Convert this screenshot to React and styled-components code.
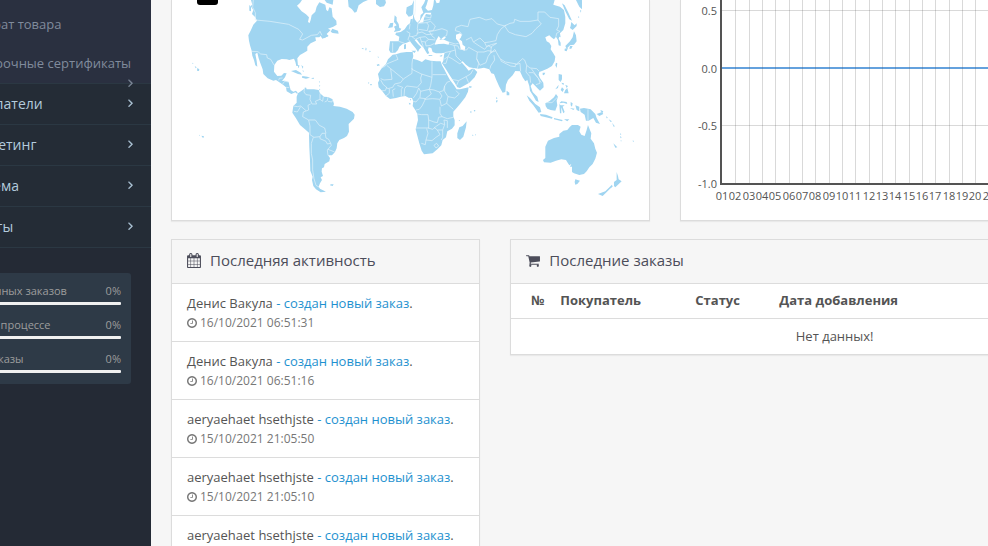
import styled, { createGlobalStyle } from "styled-components"

const GlobalStyle = createGlobalStyle`
  * { box-sizing: border-box; }
  body {
    margin: 0;
    background: #f6f6f6;
    color: #545454;
    font-family: "Open Sans", "Noto Sans", sans-serif;
    font-size: 13px;
    line-height: 19px;
  }
  a { text-decoration: none; }
`

const Page = styled.div`
  display: flex;
  height: 100vh;
  overflow: hidden;
`
const Sidebar = styled.aside`
  flex: none;
  display: flex;
  justify-content: flex-end;
  width: 151px;
  overflow: hidden;
  background: #242a35;
`
const SidebarInner = styled.div`
  flex: none;
  width: 235px;
`
const Menu = styled.ul`
  list-style: none;
  margin: 0 0 25px;
  padding: 0;
`
const MenuItem = styled.li`
  border-bottom: 1px solid #2b3843;
`
const MenuLink = styled.a`
  display: flex;
  align-items: center;
  justify-content: space-between;
  height: 40px;
  padding: 0 18px 2px 46px;
  background: #242c36;
  color: #b3cbdd;
  font-size: 14px;
`
const SubMenu = styled.ul`
  list-style: none;
  margin: 0;
  padding: 5px 0 0;
  background: #2a3040;
`
const SubLink = styled.a`
  position: relative;
  display: block;
  height: 39px;
  padding: 10px 18px 10px 47px;
  color: #808b9c;
  white-space: nowrap;
  svg {
    position: absolute;
    right: 18px;
    bottom: -4px;
  }
`
const Stats = styled.ul`
  list-style: none;
  margin: 0 20px;
  padding: 9px 10px 0;
  height: 111px;
  border-radius: 3px;
  background: #2e3a47;
  color: #9d9d9d;
  font-size: 11px;
`
const Stat = styled.li`
  height: 34px;
`
const StatLine = styled.div`
  display: flex;
  justify-content: space-between;
  line-height: 18px;
  margin-bottom: 2px;
`
const Track = styled.div`
  height: 3px;
  border-radius: 1px;
  background: #f0f0f0;
`
const Content = styled.main`
  flex: none;
  min-width: 1028px;
  width: calc(100% - 151px);
  padding: 0 20px;
`
const Grid = styled.div`
  display: grid;
  grid-template-columns: repeat(12, 1fr);
  gap: 18px 30px;
  align-items: start;
`
const Panel = styled.section`
  grid-column: span ${p => p.$span};
  position: relative;
  min-width: 0;
  overflow: hidden;
  background: #fff;
  border: 1px solid #dcdcdc;
  ${p => p.$open && "border-top: 0;"}
  box-shadow: 0 1px 1px rgba(0, 0, 0, 0.05);
`
const PanelHead = styled.header`
  display: flex;
  align-items: center;
  gap: 9px;
  height: 44px;
  padding: 0 15px 2px;
  background: #f6f6f6;
  border-bottom: 1px solid #dcdcdc;
  color: #4c4d5a;
`
const PanelTitle = styled.h3`
  margin: 0;
  font-size: 15px;
  font-weight: 400;
`
const Drawing = styled.svg`
  display: block;
  width: 100%;
  height: 220px;
`
const ZoomOut = styled.button`
  position: absolute;
  top: -16px;
  left: 25px;
  width: 21px;
  height: 21px;
  padding: 0;
  border: 0;
  border-radius: 3px;
  background: #000;
`
const Activity = styled.ul`
  list-style: none;
  margin: 0;
  padding: 0;
`
const ActivityItem = styled.li`
  padding: 10px 15px 9px;
  border-bottom: 1px solid #dcdcdc;
  a { color: #1e91cf; }
`
const When = styled.small`
  display: flex;
  align-items: center;
  gap: 3px;
  font-size: 12px;
  color: #777;
`
const Table = styled.table`
  width: 100%;
  table-layout: fixed;
  border-collapse: collapse;
`
const Th = styled.th`
  width: ${p => p.$w || "auto"};
  height: 34px;
  padding: 0 8px;
  border-bottom: 1px solid #dcdcdc;
  text-align: ${p => p.$align || "left"};
  white-space: nowrap;
`
const Td = styled.td`
  height: 36px;
  padding: 1px 0 0;
  text-align: center;
`

const ICONS = {
  angle: {
    box: "589 384 582 1088",
    d: "M1171 960q0 13-10 23l-466 466q-10 10-23 10t-23-10l-50-50q-10-10-10-23t10-23l393-393-393-393q-10-10-10-23t10-23l50-50q10-10 23-10t23 10l466 466q10 10 10 23z",
    stroke: 60,
  },
  calendar: {
    box: "64 0 1664 1792",
    d: "M192 1664h288v-288h-288v288zm352 0h320v-288h-320v288zm-352-352h288v-320h-288v320zm352 0h320v-320h-320v320zm-352-384h288v-288h-288v288zm736 736h320v-288h-320v288zm-384-736h320v-288h-320v288zm768 736h288v-288h-288v288zm-384-352h320v-320h-320v320zm-352-864v-288q0-13-9.5-22.5t-22.5-9.5h-64q-13 0-22.5 9.5t-9.5 22.5v288q0 13 9.5 22.5t22.5 9.5h64q13 0 22.5-9.5t9.5-22.5zm736 864h288v-320h-288v320zm-384-384h320v-288h-320v288zm384 0h288v-288h-288v288zm32-480v-288q0-13-9.5-22.5t-22.5-9.5h-64q-13 0-22.5 9.5t-9.5 22.5v288q0 13 9.5 22.5t22.5 9.5h64q13 0 22.5-9.5t9.5-22.5zm384-64v1280q0 52-38 90t-90 38h-1408q-52 0-90-38t-38-90v-1280q0-52 38-90t90-38h128v-96q0-66 47-113t113-47h64q66 0 113 47t47 113v96h384v-96q0-66 47-113t113-47h64q66 0 113 47t47 113v96h128q52 0 90 38t38 90z",
  },
  cart: {
    box: "64 0 1664 1792",
    d: "M704 1536q0 52-38 90t-90 38-90-38-38-90 38-90 90-38 90 38 38 90zm896 0q0 52-38 90t-90 38-90-38-38-90 38-90 90-38 90 38 38 90zm128-1088v512q0 24-16.5 42.5t-40.5 21.5l-1044 122q13 60 13 70 0 16-24 64h920q26 0 45 19t19 45-19 45-45 19h-1024q-26 0-45-19t-19-45q0-11 8-31.5t16-36 21.5-40 15.5-29.5l-177-823h-204q-26 0-45-19t-19-45 19-45 45-19h256q16 0 28.5 6.5t19.5 15.5 13 24.5 8 26 5.5 29.5 4.5 26h1201q26 0 45 19t19 45z",
  },
  clock: {
    box: "128 128 1536 1536",
    d: "M1024 544v448q0 14-9 23t-23 9h-320q-14 0-23-9t-9-23v-64q0-14 9-23t23-9h224v-352q0-14 9-23t23-9h64q14 0 23 9t9 23zm416 352q0-148-73-273t-198-198-273-73-273 73-198 198-73 273 73 273 198 198 273 73 273-73 198-198 73-273zm224 0q0 209-103 385.5t-279.5 279.5-385.5 103-385.5-103-279.5-279.5-103-385.5 103-385.5 279.5-279.5 385.5-103 385.5 103 279.5 279.5 103 385.5z",
  },
}

function Icon({ name, width, height }) {
  const { box, d, stroke = 0 } = ICONS[name]
  return <svg width={width} height={height} viewBox={box} fill="currentColor" stroke="currentColor" strokeWidth={stroke} aria-hidden="true">
    <path d={d} />
  </svg>
}

// land outlines, three map units to one pixel
const AMERICAS = [
  "M243 0L247 14 242 18 250 30 246 42 256 52 261 62 250 74 243 90 235 106 237 122 240 136 245 152 247 167 252 180 256 196 262 200 260 182 256 162 262 158 266 175 272 192 278 208 280 222 293 235 310 242 318 240 328 247 340 255 348 262 350 274 364 282 376 277 382 282 383 278 378 272 370 275 362 270 358 256 356 246 345 242 336 243 345 232 350 220 342 219 334 227 322 228 312 215 313 195 322 182 335 177 350 178 358 180 372 176 376 185 379 198 384 198 382 175 390 165 402 158 412 152 412 140 422 130 438 122 436 112 448 112 452 108 457 116 476 108 470 102 482 90 474 86 490 80 500 74 499 62 488 50 485 25 478 22 474 34 469 30 466 14 448 7 440 20 436 35 425 46 422 60 419 69 414 66 417 52 408 43 395 34 381 17 390 9 396 0Z",
  "M384 280L398 270 408 262 410 268 418 268 432 268 446 270 450 280 462 290 474 291 488 298 492 312 490 318 510 320 530 326 548 336 554 344 552 356 536 372 537 395 531 408 522 414 508 420 502 430 500 445 495 456 486 466 474 466 480 474 478 484 464 492 462 502 456 505 455 515 459 528 452 532 456 540 450 550 446 560 450 566 468 575 452 577 438 568 430 558 426 540 428 530 421 512 420 480 418 440 417 398 405 388 390 375 378 355 367 338 370 318 380 308 380 290Z",
  "M464 0L470 8 488 14 490 0ZM534 0L536 20 546 28 554 38 560 35 566 16 580 6 594 0Z",
  "M487 86L504 92 506 101 488 99 482 95ZM458 110L472 106 474 109 462 115ZM363 213L378 210 392 218 396 224 384 222ZM397 228L412 230 420 233 408 236 396 233ZM425 234L432 233 432 236 425 236Z",
  "M238 15L243 20 243 34 238 32ZM82 204L88 208 87 213 81 212ZM74 198L80 202 77 205ZM66 188L70 190 69 193ZM95 407L102 409 101 413 96 412ZM87 404L90 406 88 408ZM482 553L491 553 488 558 480 556ZM385 195L388 195 387 204 384 202ZM394 195L400 200 398 206ZM398 210L402 214 399 215ZM576 146L580 144 581 148ZM586 143L590 144 588 149ZM598 152L602 153 601 157ZM447 243L450 246 447 248ZM448 255L451 257 448 260ZM448 266L451 268 448 272Z",
]
const AMERICA_BORDERS =
  "M256 60L300 64 356 73 386 88 398 102 389 118 398 120 424 106 442 104 450 94 456 106M246 154L264 155 272 162 290 164 292 174 302 178 312 195M326 241L328 235 338 234M338 252L344 244 356 246M348 262L358 263M404 262L402 276 408 284 422 286 420 298 426 312 440 312 436 304 450 298 450 280M450 298L458 304 460 290M464 306L472 302 474 291M474 304L486 306 488 298M422 312L414 316 416 330 400 336 398 350 416 360 420 378 420 404 432 412 450 410 456 400 468 400 464 384 448 376 436 360 416 360M370 318L382 320 392 318 408 332M372 334L382 336 392 320M450 410L450 416 468 424 472 432 482 430 476 418 468 414 466 402M482 430L484 436 472 450 474 466M474 448L494 456M430 412L424 430 424 460 428 480 428 510 432 536 438 556 448 562M250 0L248 22 256 38 256 60"

const OLD_WORLD = [
  // Africa
  "M98 164L108 163 122 158 140 156 158 156 160 168 158 176 172 180 186 186 196 178 212 182 230 184 242 184 246 196 252 206 260 222 270 240 282 256 290 268 300 268 326 262 324 275 316 292 302 310 290 324 280 335 280 350 284 360 284 376 276 386 262 394 258 412 248 420 244 436 232 448 218 460 192 463 185 452 178 430 170 400 167 388 174 360 172 342 166 330 158 318 160 304 156 294 146 293 136 288 122 290 108 294 90 297 78 288 66 272 56 262 54 248 58 240 54 222 64 206 78 192 84 178Z",
  // Europe and Asia
  "M162 0L156 14 140 22 138 40 146 50 154 48 160 42 164 58 172 68 180 60 182 45 190 38 184 22 192 10 196 0 204 0 200 14 196 24 204 32 216 30 220 16 222 0 226 0 230 10 238 8 240 0 584 0 580 14 600 20 612 30 616 50 616 70 610 90 600 100 602 112 598 110 596 116 602 128 602 138 596 136 594 120 588 110 582 118 574 112 568 106 556 112 560 124 568 128 574 138 572 148 580 160 586 170 584 184 576 198 562 206 548 212 538 216 536 224 540 234 550 248 551 262 540 272 534 266 526 258 518 250 512 258 518 276 532 290 536 306 528 302 520 288 510 272 508 258 502 240 496 244 488 232 480 214 466 213 458 226 444 240 438 254 436 276 428 278 418 260 408 238 402 222 394 220 388 208 372 203 356 206 340 204 328 202 318 194 308 184 304 186 318 202 326 212 336 206 342 206 352 216 344 232 328 248 300 264 292 262 284 248 272 230 258 208 246 190 250 182 252 166 254 158 244 160 228 160 218 156 214 144 206 142 204 150 208 160 202 162 196 152 190 142 180 132 170 118 164 120 174 132 184 142 178 148 174 156 168 146 158 134 150 124 140 128 128 132 118 140 114 150 106 158 92 158 87 150 90 124 116 124 118 110 106 104 108 98 122 96 134 88 142 76 150 70 152 58 158 56 158 70 175 70 190 67 192 55 198 42 212 44 214 38 196 38 192 42 186 52 178 66 170 72 158 70Z",
  "M104 46L110 52 110 62 116 72 118 84 124 86 120 92 102 96 106 88 102 80 110 76 102 66ZM90 70L100 68 98 82 84 84 88 76ZM48 0L48 12 60 21 72 19 78 8 76 0ZM154 152L168 152 164 159ZM132 134L138 132 138 146 132 148ZM206 165L218 166 216 168 206 168ZM238 168L248 164 244 170ZM320 364L318 382 310 410 300 420 292 414 292 400 298 382 308 378Z",
  "M330 336L334 332 334 340ZM341 330L346 330 345 336ZM296 360L300 361 298 364ZM345 402L348 404 346 407ZM336 404L341 405 338 408ZM327 259L335 259 334 263 328 263ZM150 296L154 298 151 302ZM146 308L152 310 150 316ZM5 144L9 145 7 148ZM15 148L20 148 18 152ZM27 153L30 155 28 157ZM52 170L56 170 56 174ZM50 194L56 192 60 196 52 198ZM24 247L28 248 26 252ZM30 252L36 252 33 257ZM409 292L412 294 410 298ZM408 302L412 304 409 308Z",
]
const SEAS =
  "M224 134L228 122 236 108 242 116 238 120 248 118 254 120 268 126 266 134 252 131 236 132ZM244 116L252 110 258 112 252 118ZM288 104L300 100 306 104 302 114 298 118 306 124 308 134 316 140 314 152 302 148 300 136 296 126 288 116Z"
const OLD_WORLD_BORDERS =
  "M108 164L114 178 104 182 80 192 74 200 64 202M80 196L92 206 96 238 72 240 62 236M92 206L130 237 156 220 156 204M158 176L156 192 156 208 184 222 216 232 216 184M218 224H258M130 237L122 248 104 252 98 262 84 266 78 262M62 240L70 254 80 262 76 272 66 272M78 288L88 280 88 266M100 290L98 270 106 266M124 290L124 268 128 262 112 256M132 290L134 266 140 258 172 262 184 248 182 234 186 222M160 294L170 280 176 264M176 264L182 274 180 292 168 306 160 304M182 274L208 268 212 256 216 232M208 268L214 282 196 296 180 294M196 296L194 302 186 318 178 328 168 330M194 298L218 296 240 298 246 288 238 276 222 270 208 268M238 276L250 272 254 258 262 246 270 244M254 258L254 274 264 290 284 294 298 282 288 272M264 290L260 310 244 318 240 300M260 310L280 328M240 320L240 340 246 350 262 356 280 352M246 350L236 352 232 368 222 366 206 360 204 344 184 344 172 342M206 360V384H168M200 386L204 400 198 420 196 434 184 430M204 384L218 388 230 378 242 370 254 374 248 390 232 390 222 382M232 390L240 404 228 412 216 422 198 420M248 390L248 412 244 420M254 374L252 360 262 362 262 384M222 436L230 430 236 438 228 444ZM140 94L150 100 148 108 156 110 170 106 174 96 172 86 174 70M150 72L148 88M174 70L200 68 206 76 202 92 176 88 M200 68L212 64 226 78 220 92 206 94M190 62L212 58M194 50L212 54 214 44M206 94L224 92 246 86 262 92 260 106 250 112M148 108L144 118 150 124M156 110L166 118 180 112 196 110 206 118 226 120M116 124L134 130M98 128V156M166 0L166 30 164 46M170 100L186 96 200 104 220 102M180 112L184 124 196 126 206 118M184 124L190 140M196 126L198 138 212 136 224 130M208 94L216 108 226 116M268 132L282 136 286 150 272 154 254 158M282 136L294 138 298 148M266 126L286 132 296 130M272 154L264 170 252 178M264 170L276 176 300 192 306 186M286 150L288 168 304 184M264 170L258 190 250 190M274 238L296 242 318 230 332 222 340 208M296 242L290 256M318 230L326 248M300 148L320 150 326 142 344 152 352 156 350 176 356 190 352 206M352 156L372 156 384 152 396 154M350 176L360 196 378 188 384 170 392 158 408 152M306 104L300 96 286 92 288 82 304 76 324 80 330 58 358 52 378 60 396 56 412 72 434 78 438 74M318 120L334 112 340 126 358 138 374 148M340 126L360 114 374 128 388 126 408 122 412 104 422 88 434 78M374 128L380 140 394 134 410 130M374 148L384 136 396 144M434 78L450 70 462 68 464 58 480 64 510 64 534 60 544 72 528 86 516 100 498 110 466 104 446 96 434 78M534 60L534 36 554 36 570 52 596 56 596 78 590 90 600 94M410 130L394 140 392 160 404 148 410 158 420 176 436 186 470 192 488 176 494 180 500 196 510 204 530 206 538 214M402 166L404 180 392 198 390 206M422 178L424 184 452 198 466 200 466 192M468 194L480 190 482 214M500 196L498 216 510 230 512 248M506 218L520 218 536 236 540 250 528 254M514 206L530 228 544 248M588 110L590 100 600 94"

// right part: islands of the Pacific and Oceania
const PACIFIC = [
  "M276 375L294 375 302 380 298 394 304 404 314 408 320 390 324 375 330 390 334 400 332 416 342 430 346 446 351 458 346 476 338 492 328 502 320 514 312 522 298 525 282 520 276 516 276 500 270 500 274 492 268 496 264 490 258 480 244 478 228 482 212 488 192 487 189 480 196 474 196 440 204 422 222 414 238 410 238 402 250 392 262 390 270 380Z",
  "M286 538L300 542 292 552 286 554 284 546ZM410 516L414 528 416 538 425 544 414 554 406 562 402 558 402 546 410 540ZM396 554L398 560 390 566 378 578 368 588 354 582 376 574 386 564Z",
  "M300 326L312 324 332 328 346 342 350 354 360 372 348 368 340 354 326 362 318 362 314 344 302 336ZM196 310L208 304 222 292 228 282 234 290 230 302 232 316 226 332 212 330 202 326 197 318ZM140 286L150 294 166 312 180 322 184 336 176 338 160 316 148 302ZM180 342L198 344 218 352 216 356 198 352 182 348Z",
  "M238 310L250 308 262 312 260 306 244 304ZM238 312L240 340 244 340 244 322 250 340 254 336 248 320 254 316 242 316ZM222 354L232 356 248 360 246 364 222 358ZM252 358L268 358 262 364ZM272 306L278 310 276 320 272 316ZM270 324L284 326 280 330ZM286 316L298 320 298 334 290 330Z",
  "M236 222L246 224 246 238 242 246 236 240ZM244 248L252 250 250 256ZM226 268L236 254 234 264ZM256 254L264 258 260 264ZM246 262L252 268 248 276 242 270ZM262 264L266 280 252 280 256 270ZM228 188L232 190 230 204 226 196ZM80 272L88 278 88 286 80 286ZM188 218L196 218 192 226 188 224Z",
  "M282 94L288 106 290 124 282 134 270 136 260 146 256 138 270 124 278 112ZM254 146L264 144 260 154 254 152ZM270 138L278 138 274 146 268 146ZM274 66L284 76 290 70 290 78 278 90 270 84 272 78ZM246 10L254 16 266 40 276 62 268 58 256 34ZM288 0L306 0 306 28 298 20 292 8ZM300 30L304 32 302 38ZM296 48L298 52 294 54Z",
  "M350 342L366 336 370 342 358 348ZM362 330L370 334 368 338 362 334ZM378 348L384 354 380 355ZM386 358L396 364 392 366ZM396 368L404 378 402 382ZM420 400L424 402 422 406ZM420 408L425 412 422 415ZM400 430L412 442 406 443ZM457 422L462 422 461 426ZM422 420L425 422 423 425ZM49 292L52 294 50 298ZM49 300L53 301 51 308Z",
]

function WorldMap() {
  return <Drawing viewBox="172 0 477 220" preserveAspectRatio="xMinYMin meet" fill="#a0d5f1" role="img" aria-label="Карта мира">
    <g transform="translate(170 0) scale(.3333)">
      {AMERICAS.map(d => <path key={d} d={d} />)}
      <path d={AMERICA_BORDERS} fill="none" stroke="#e4f3fb" strokeWidth="2" />
    </g>
    <g transform="translate(360 0) scale(.3333)">
      {OLD_WORLD.map(d => <path key={d} d={d} />)}
      <path d={SEAS} fill="#fff" />
      <path d={OLD_WORLD_BORDERS} fill="none" stroke="#e4f3fb" strokeWidth="2" />
    </g>
    <g transform="translate(480 0) scale(.3333)">
      {PACIFIC.map(d => <path key={d} d={d} />)}
      <path d="M324 328V362M198 308L216 308 232 292" fill="none" stroke="#e4f3fb" strokeWidth="2" />
    </g>
  </Drawing>
}

const days = Array.from({ length: 31 }, (_, i) => i)
const levels = [["0.5", 10], ["0.0", 68], ["-0.5", 125], ["-1.0", 183]]

function SalesChart() {
  const dayX = i => 722 + Math.round(i * 13.33)
  return <Drawing viewBox="681 0 477 220" preserveAspectRatio="xMinYMin meet" fontSize="11" fill="#545454">
    <path d="M722 68H1122" stroke="#64a1dd" strokeWidth="2" />
    <g stroke="#545454" strokeOpacity=".22">
      {days.slice(1).map(i => <path key={i} d={`M${dayX(i) + 0.5} 0V183`} />)}
      <path d="M722 10.5H1122M722 125.5H1122" />
    </g>
    <path d="M721 0V184H1122" fill="none" stroke="#545454" strokeWidth="2" />
    {levels.map(([label, y]) => <text key={label} x="717" y={y + 5} textAnchor="end">{label}</text>)}
    {days.map(i => <text key={i} x={dayX(i)} y="200" textAnchor="middle">{String(i + 1).padStart(2, "0")}</text>)}
  </Drawing>
}

const menu = ["Покупатели", "Маркетинг", "Система", "Отчеты"]
const stats = ["Выполненных заказов", "Заказов в процессе", "Другие заказы"]
const activity = [
  { name: "Денис Вакула", date: "16/10/2021 06:51:31" },
  { name: "Денис Вакула", date: "16/10/2021 06:51:16" },
  { name: "aeryaehaet hsethjste", date: "15/10/2021 21:05:50" },
  { name: "aeryaehaet hsethjste", date: "15/10/2021 21:05:10" },
  { name: "aeryaehaet hsethjste", date: "15/10/2021 21:04:32" },
]

function SideNav() {
  return <Sidebar>
    <SidebarInner>
      <Menu>
        <MenuItem>
          <SubMenu>
            <li><SubLink href="#">Возврат товара</SubLink></li>
            <li><SubLink href="#">Подарочные сертификаты<Icon name="angle" width={5} height={8} /></SubLink></li>
          </SubMenu>
        </MenuItem>
        {menu.map(m => <MenuItem key={m}>
          <MenuLink href="#">{m}<Icon name="angle" width={5} height={8} /></MenuLink>
        </MenuItem>)}
      </Menu>
      <Stats>
        {stats.map(s => <Stat key={s}>
          <StatLine><span>{s}</span><span>0%</span></StatLine>
          <Track />
        </Stat>)}
      </Stats>
    </SidebarInner>
  </Sidebar>
}

function App() {
  return <>
    <GlobalStyle />
    <Page>
      <SideNav />
      <Content>
        <Grid>
          <Panel $span={6} $open>
            <WorldMap />
            <ZoomOut type="button" aria-label="Уменьшить" />
          </Panel>
          <Panel $span={6} $open>
            <SalesChart />
          </Panel>
          <Panel $span={4}>
            <PanelHead>
              <Icon name="calendar" width={14} height={15} />
              <PanelTitle>Последняя активность</PanelTitle>
            </PanelHead>
            <Activity>
              {activity.map(a => <ActivityItem key={a.date}>
                {a.name} <a href="#">- создан новый заказ</a>.
                <When><Icon name="clock" width={10} height={10} />{a.date}</When>
              </ActivityItem>)}
            </Activity>
          </Panel>
          <Panel $span={8}>
            <PanelHead>
              <Icon name="cart" width={14} height={15} />
              <PanelTitle>Последние заказы</PanelTitle>
            </PanelHead>
            <Table>
              <thead>
                <tr>
                  <Th $w="41px" $align="right">№</Th>
                  <Th $w="135px">Покупатель</Th>
                  <Th $w="84px">Статус</Th>
                  <Th $w="220px">Дата добавления</Th>
                  <Th $align="right">Итого</Th>
                  <Th $align="right">Действие</Th>
                </tr>
              </thead>
              <tbody>
                <tr><Td colSpan={6}>Нет данных!</Td></tr>
              </tbody>
            </Table>
          </Panel>
        </Grid>
      </Content>
    </Page>
  </>
}

export default App
